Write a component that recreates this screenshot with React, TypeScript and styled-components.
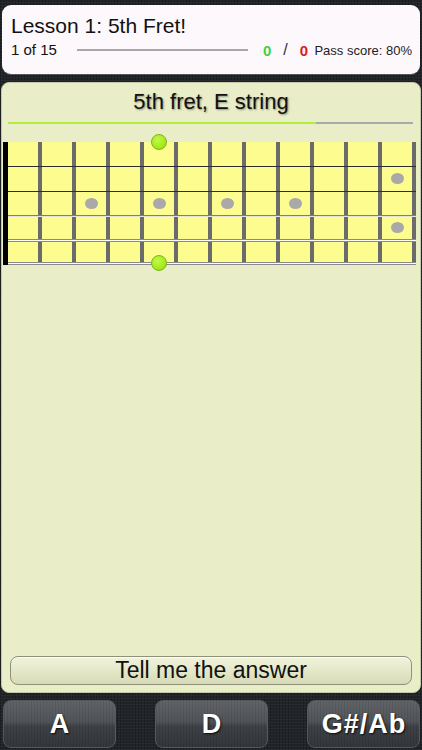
import React from 'react';
import styled, { createGlobalStyle, css } from 'styled-components';

const GlobalStyle = createGlobalStyle`
  *, *::before, *::after { box-sizing: border-box; }
  html, body { margin: 0; padding: 0; }
  body {
    background-color: #212529;
    background-image:
      repeating-linear-gradient(0deg, rgba(255, 255, 255, 0.035) 0 1px, transparent 1px 3px),
      repeating-linear-gradient(90deg, rgba(0, 0, 0, 0.22) 0 1px, transparent 1px 3px);
    font-family: 'Liberation Sans', Arial, sans-serif;
  }
`;

const Screen = styled.div`
  width: 422px;
  height: 750px;
  display: flex;
  flex-direction: column;
  overflow: hidden;
`;

const LessonCard = styled.header`
  margin: 5px 2px 0 2px;
  height: 69px;
  padding: 9px 8px 0 9px;
  border-radius: 9px;
  background: #fdf8fc;
  box-shadow: 0 1px 0 rgba(120, 120, 120, 0.6);
  color: #111;
`;

const LessonTitle = styled.h1`
  margin: 0;
  font-size: 21px;
  line-height: 24px;
  font-weight: normal;
`;

const LessonMeta = styled.div`
  display: flex;
  align-items: center;
  margin-top: 3px;
  height: 18px;
`;

const Step = styled.span`
  font-size: 15px;
  line-height: 18px;
`;

const StepTrack = styled.div`
  width: 171px;
  height: 2px;
  margin: 0 15px 0 20px;
  background: #a7a7a7;
`;

const Score = styled.span<{ $tone: 'right' | 'wrong' }>`
  font-size: 15px;
  font-weight: bold;
  color: ${({ $tone }) => ($tone === 'right' ? '#3fd23f' : '#e01c1c')};
`;

const Slash = styled.span`
  margin: 0 12px;
  font-size: 16px;
  color: #333;
`;

const PassScore = styled.span`
  margin-left: auto;
  font-size: 13px;
  color: #222;
`;

const Panel = styled.main`
  flex: 0 0 611px;
  margin: 8px 1px 0 1px;
  padding: 6px 0 7px 0;
  display: flex;
  flex-direction: column;
  border-radius: 8px;
  border: 1px solid #c4c8a6;
  background: #e9eec8;
`;

const Question = styled.h2`
  margin: 0;
  text-align: center;
  font-size: 22px;
  line-height: 26px;
  font-weight: normal;
  color: #111;
  text-shadow: 1px 1px 2px rgba(0, 0, 0, 0.4);
`;

const Timer = styled.div`
  height: 2px;
  margin: 7px 7px 0 6px;
  background: #a9a9a9;
`;

const TimerFill = styled.div`
  height: 100%;
  background: #b2ef3a;
`;

const Board = styled.div`
  position: relative;
  width: 413px;
  margin: 18px 0 0 1px;
  border-left: 5px solid #000;
  background: repeating-linear-gradient(to right, #fdfc8f 0 30px, #6b6b6b 30px 34px);
`;

type Gauge = 'plain' | 'wound' | 'heavy';

const gauges: Record<Gauge, ReturnType<typeof css>> = {
  plain: css`
    box-shadow: inset 0 -1px #2c2c2c;
  `,
  wound: css`
    box-shadow: inset 0 -1px #e4e4dc, inset 0 -2px #7e7e7e;
  `,
  heavy: css`
    box-shadow: inset 0 -1px #8a8a8a, inset 0 -2px #fbfbfb, inset 0 -3px #8a8a8a;
  `,
};

const Course = styled.div<{ $h: number; $gauge: Gauge }>`
  height: ${({ $h }) => $h}px;
  ${({ $gauge }) => gauges[$gauge]};
`;

const cellCenter = (fret: number) => (fret - 1) * 34 + 15;

const Inlay = styled.span<{ $fret: number; $y: number }>`
  position: absolute;
  left: ${({ $fret }) => cellCenter($fret) - 6.5}px;
  top: ${({ $y }) => $y - 5.5}px;
  width: 13px;
  height: 11px;
  border-radius: 50%;
  background: #a9a9a9;
`;

const Target = styled.span<{ $fret: number; $y: number }>`
  position: absolute;
  left: ${({ $fret }) => cellCenter($fret) - 8}px;
  top: ${({ $y }) => $y - 8}px;
  width: 16px;
  height: 16px;
  border-radius: 50%;
  border: 1px solid #7fb317;
  background: radial-gradient(circle at 40% 35%, #c2f84a 0%, #a6ec1f 55%, #94d914 100%);
`;

const AnswerButton = styled.button`
  margin: auto 8px 0 8px;
  height: 29px;
  padding: 0;
  border: 1px solid #8d907a;
  border-radius: 8px;
  background: linear-gradient(to bottom, #f1f3dc 0%, #e4e8c8 50%, #d6dab6 100%);
  box-shadow: inset 0 1px 0 rgba(255, 255, 255, 0.8);
  font-family: inherit;
  font-size: 23px;
  line-height: 27px;
  color: #111;
`;

const Choices = styled.nav`
  display: flex;
  justify-content: space-between;
  margin-top: 7px;
  padding: 0 2px 0 3px;
`;

const Choice = styled.button`
  width: 113px;
  height: 48px;
  padding: 0 0 0 1px;
  border: 1px solid #55595d;
  border-radius: 8px;
  background:
    repeating-linear-gradient(90deg, rgba(0, 0, 0, 0.08) 0 1px, transparent 1px 3px),
    linear-gradient(to bottom, #606367 0%, #515458 45%, #3e4145 55%, #33363a 100%);
  font-family: inherit;
  font-size: 27px;
  font-weight: bold;
  letter-spacing: 1px;
  color: #fff;
  text-shadow: 1px 1px 2px rgba(0, 0, 0, 0.85);
`;

const courses: { h: number; gauge: Gauge }[] = [
  { h: 25, gauge: 'plain' },
  { h: 25, gauge: 'plain' },
  { h: 25, gauge: 'wound' },
  { h: 25, gauge: 'heavy' },
  { h: 23, gauge: 'heavy' },
];

const inlays = [
  { fret: 3, y: 61 },
  { fret: 5, y: 61 },
  { fret: 7, y: 61 },
  { fret: 9, y: 61 },
  { fret: 12, y: 36 },
  { fret: 12, y: 85 },
];

const targets = [
  { fret: 5, y: 0 },
  { fret: 5, y: 121 },
];

const notes = ['A', 'D', 'G#/Ab'];

export default function App() {
  const timeLeft = 76;

  return (
    <Screen>
      <GlobalStyle />
      <LessonCard>
        <LessonTitle>Lesson 1: 5th Fret!</LessonTitle>
        <LessonMeta>
          <Step>1 of 15</Step>
          <StepTrack />
          <Score $tone="right">0</Score>
          <Slash>/</Slash>
          <Score $tone="wrong">0</Score>
          <PassScore>Pass score: 80%</PassScore>
        </LessonMeta>
      </LessonCard>

      <Panel>
        <Question>5th fret, E string</Question>
        <Timer>
          <TimerFill style={{ width: `${timeLeft}%` }} />
        </Timer>
        <Board>
          {courses.map((c, i) => (
            <Course key={i} $h={c.h} $gauge={c.gauge} />
          ))}
          {inlays.map((d, i) => (
            <Inlay key={`i${i}`} $fret={d.fret} $y={d.y} />
          ))}
          {targets.map((t, i) => (
            <Target key={`t${i}`} $fret={t.fret} $y={t.y} />
          ))}
        </Board>
        <AnswerButton>Tell me the answer</AnswerButton>
      </Panel>

      <Choices>
        {notes.map((n) => (
          <Choice key={n}>{n}</Choice>
        ))}
      </Choices>
    </Screen>
  );
}
